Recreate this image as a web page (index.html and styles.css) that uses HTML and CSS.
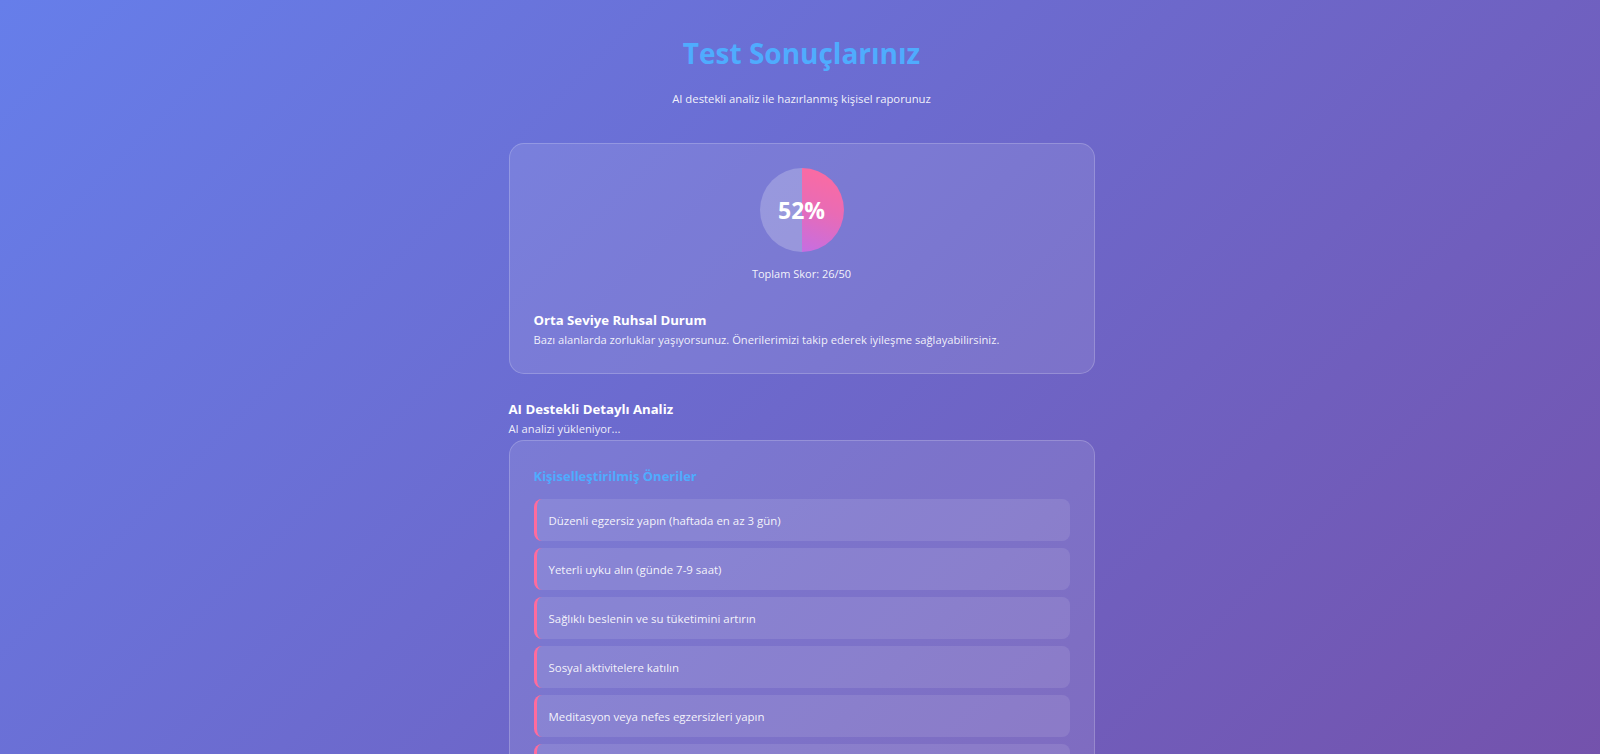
FILE: index.html
```html
<!DOCTYPE html>
<html lang="tr">
<head>
<meta charset="utf-8">
<title>Test Sonuçlarınız</title>
<link rel="stylesheet" href="styles.css">
</head>
<body>
<div class="page">
  <header class="header">
    <h1 class="title">Test Sonuçlarınız</h1>
    <p class="subtitle">AI destekli analiz ile hazırlanmış kişisel raporunuz</p>
  </header>

  <section class="card score-card">
    <div class="score">
      <div class="pie"><span class="pie-value">52%</span></div>
      <p class="score-total">Toplam Skor: 26/50</p>
    </div>
    <div class="status">
      <h3 class="status-title">Orta Seviye Ruhsal Durum</h3>
      <p class="status-text">Bazı alanlarda zorluklar yaşıyorsunuz. Önerilerimizi takip ederek iyileşme sağlayabilirsiniz.</p>
    </div>
  </section>

  <section class="analysis">
    <h3 class="analysis-title">AI Destekli Detaylı Analiz</h3>
    <p class="analysis-loading">AI analizi yükleniyor...</p>
  </section>

  <section class="card recs">
    <h3 class="recs-title">Kişiselleştirilmiş Öneriler</h3>
    <ul class="rec-list">
      <li class="rec">Düzenli egzersiz yapın (haftada en az 3 gün)</li>
      <li class="rec">Yeterli uyku alın (günde 7-9 saat)</li>
      <li class="rec">Sağlıklı beslenin ve su tüketimini artırın</li>
      <li class="rec">Sosyal aktivitelere katılın</li>
      <li class="rec">Meditasyon veya nefes egzersizleri yapın</li>
      <li class="rec">Bir uzmanla görüşmeyi düşünün</li>
      <li class="rec">Günlük tutarak duygularınızı ifade edin</li>
      <li class="rec">Hobilerinize zaman ayırın</li>
    </ul>
  </section>

  <section class="card actions">
    <button class="btn btn-primary">Testi Tekrarla</button>
    <button class="btn btn-secondary">Ana Sayfaya Dön</button>
  </section>
</div>
</body>
</html>
```

FILE: styles.css
```css
* { box-sizing: border-box; }
html, body { margin: 0; padding: 0; }
body {
  font-family: "Open Sans", "Noto Sans", sans-serif;
  color: #fff;
  background: linear-gradient(135deg, #667eea 0%, #764ba2 100%);
  min-height: 100vh;
}
.page {
  width: 589px;
  margin: 0 auto;
  padding: 33px 0 120px 3px;
}
.header { text-align: center; }
.title {
  margin: 0;
  font-size: 28px;
  line-height: 40px;
  font-weight: 700;
  color: #4facfe;
}
.subtitle {
  margin: 18px 0 0;
  font-size: 11.3px;
  line-height: 16px;
  color: rgba(255,255,255,0.92);
}
.card {
  background: rgba(255,255,255,0.1);
  border: 1px solid rgba(255,255,255,0.2);
  border-radius: 15px;
  padding: 24px;
}
.score-card { margin-top: 36px; padding-bottom: 25px; }
.score { display: flex; flex-direction: column; align-items: center; }
.pie {
  width: 84px; height: 84px;
  border-radius: 50%;
  background:
    linear-gradient(200deg, #ff6b9d 0%, #e96bb5 50%, #c56ee3 100%) right / 50% 100% no-repeat,
    rgba(255,255,255,0.22);
  display: flex; align-items: center; justify-content: center;
}
.pie-value { font-size: 23px; font-weight: 700; }
.score-total {
  margin: 14px 0 0;
  font-size: 11px;
  line-height: 16px;
  color: rgba(255,255,255,0.92);
}
.status { margin-top: 28px; }
.status-title { margin: 0; font-size: 13.2px; line-height: 20px; font-weight: 700; }
.status-text { margin: 2px 0 0; font-size: 11.2px; line-height: 16px; color: rgba(255,255,255,0.9); }

.analysis { margin-top: 25px; }
.analysis-title { margin: 0; font-size: 13.2px; line-height: 20px; font-weight: 700; }
.analysis-loading { margin: 2px 0 0; font-size: 11.2px; line-height: 15px; color: rgba(255,255,255,0.9); }

.recs { margin-top: 4px; padding-top: 24px; }
.recs-title { margin: 0; font-size: 13px; line-height: 22px; font-weight: 700; color: #4facfe; }
.rec-list { list-style: none; margin: 12px 0 0; padding: 0; display: flex; flex-direction: column; gap: 7px; }
.rec {
  background: rgba(255,255,255,0.1);
  border-left: 3px solid #ff6b9d;
  border-radius: 8px;
  padding: 0 12px;
  height: 42px;
  display: flex; align-items: center;
  font-size: 11.45px;
  color: rgba(255,255,255,0.92);
}
.actions { margin-top: 24px; display: flex; gap: 12px; justify-content: center; }
.btn { border: 0; border-radius: 25px; padding: 12px 28px; font: 600 13px "Open Sans", sans-serif; color: #fff; }
.btn-primary { background: linear-gradient(135deg, #ff6b9d, #c56ee3); }
.btn-secondary { background: rgba(255,255,255,0.2); }
```
